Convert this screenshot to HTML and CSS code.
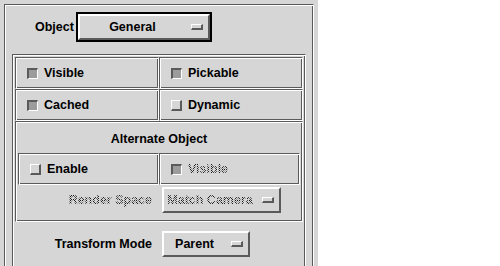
FILE: index.html
```html
<!DOCTYPE html>
<html>
<head>
<meta charset="utf-8">
<title>Object</title>
<link rel="stylesheet" href="styles.css">
</head>
<body>
<div class="panel">
  <div class="frame outer">
    <div class="obj-row">
      <span class="obj-lbl">Object</span>
      <div class="focus">
        <div class="opt opt-general"><span class="opt-text">General</span><span class="ind"></span></div>
      </div>
    </div>
    <div class="frame group">
      <div class="grid">
        <div class="frame cell"><span class="cb on"></span><span class="cell-lbl">Visible</span></div>
        <div class="frame cell"><span class="cb on"></span><span class="cell-lbl">Pickable</span></div>
        <div class="frame cell"><span class="cb on"></span><span class="cell-lbl">Cached</span></div>
        <div class="frame cell"><span class="cb"></span><span class="cell-lbl">Dynamic</span></div>
      </div>
      <div class="frame alt">
        <div class="alt-title">Alternate Object</div>
        <div class="grid alt-grid">
          <div class="frame cell"><span class="cb"></span><span class="cell-lbl">Enable</span></div>
          <div class="frame cell"><span class="cb on"></span><span class="cell-lbl dis">Visible</span></div>
        </div>
        <div class="row render-row">
          <span class="row-lbl dis">Render Space</span>
          <div class="opt opt-match"><span class="opt-text dis">Match Camera</span><span class="ind"></span></div>
        </div>
      </div>
      <div class="row transform-row">
        <span class="row-lbl">Transform Mode</span>
        <div class="opt opt-parent"><span class="opt-text">Parent</span><span class="ind"></span></div>
      </div>
    </div>
  </div>
</div>
</body>
</html>
```
FILE: styles.css
```css
html, body {
  margin: 0;
  background: #fff;
}
body {
  font: bold 12.5px "Liberation Sans", Arial, sans-serif;
  color: #000;
}
.panel {
  width: 318px;
  height: 266px;
  box-sizing: border-box;
  padding: 4px 0 0 4px;
  background: #d6d6d6;
  overflow: hidden;
}
.frame {
  border: 1px solid;
  border-color: #5a5a5a #fff #fff #5a5a5a;
  box-shadow: inset 1px 1px 0 #fff, inset -1px -1px 0 #5a5a5a;
  box-sizing: border-box;
}
.outer {
  width: 310px;
  height: 290px;
  padding: 7px 7px 0 7px;
}
.obj-row {
  display: flex;
  align-items: center;
  height: 30px;
  margin-bottom: 12px;
}
.obj-lbl {
  margin-left: 23px;
  margin-right: 2px;
}
.focus {
  border: 2px solid #000;
}
.opt {
  display: flex;
  align-items: center;
  height: 26px;
  box-sizing: border-box;
  border: 2px solid;
  border-color: #fff #5a5a5a #5a5a5a #fff;
  padding-right: 5px;
}
.opt-general { width: 132px; }
.opt-match { width: 119px; }
.opt-parent { width: 88px; }
.opt-text {
  flex: 1;
  text-align: center;
  line-height: 20px;
}
.ind {
  width: 12px;
  height: 6px;
  box-sizing: border-box;
  margin-left: 6px;
  border-style: solid;
  border-width: 1px 2px 2px 1px;
  border-color: #fff #5a5a5a #5a5a5a #fff;
  background: #d6d6d6;
}
.group {
  width: 294px;
  height: 240px;
  padding: 2px;
}
.grid {
  display: grid;
  grid-template-columns: 1fr 1fr;
  grid-auto-rows: 32px;
}
.cell {
  display: flex;
  align-items: center;
  padding-left: 11px;
}
.cb {
  width: 11px;
  height: 11px;
  box-sizing: border-box;
  margin-right: 6px;
  border-style: solid;
  border-width: 1px 2px 2px 1px;
  border-color: #fff #5a5a5a #5a5a5a #fff;
  background: #d6d6d6;
}
.cb.on {
  border-width: 2px 1px 1px 2px;
  border-color: #5a5a5a #fff #fff #5a5a5a;
  background: #9c9c9c;
}
.alt {
  padding: 0 2px;
}
.alt-title {
  padding-top: 4px;
  line-height: 27px;
  text-align: center;
}
.row {
  display: flex;
  align-items: center;
}
.row-lbl {
  text-align: right;
  margin-right: 10px;
}
.render-row {
  padding: 2px 0 8px;
}
.render-row .row-lbl {
  width: 134px;
}
.transform-row {
  padding-top: 9px;
}
.transform-row .row-lbl {
  width: 137px;
}
.dis {
  color: transparent;
  background: repeating-conic-gradient(#1e1e1e 0 25%, transparent 0 50%) 0 0 / 2px 2px;
  -webkit-background-clip: text;
  background-clip: text;
}
```
